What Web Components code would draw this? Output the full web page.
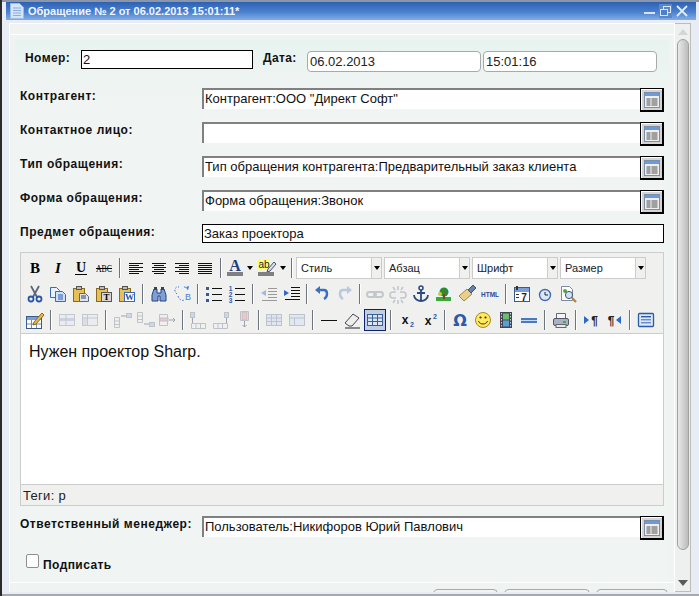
<!DOCTYPE html>
<html><head><meta charset="utf-8"><title>Обращение</title>
<style>
html,body{margin:0;padding:0;height:596px;overflow:hidden;background:#e8ecf4}
body{font-family:"Liberation Sans",Arial,sans-serif}
</style></head><body>
<app-window caption="Обращение № 2 от 06.02.2013 15:01:11*">
  <doc-form></doc-form>
</app-window>
<script>
const rows=(xs,y,ws,step,c)=>ws.map((w,i)=>`<rect x="${xs[i]}" y="${y+i*step}" width="${w}" height="1" fill="${c||'#111'}"/>`).join('');
const align=(xs,ws)=>rows(xs,5,ws,2,'#111');
const doc=(x,y,w,h,f,s)=>`<path d="M${x} ${y}h${w-3}l3 3v${h-3}h-${w}z" fill="${f||'#fff'}" stroke="${s||'#3c6ab0'}"/>`;
const clip=(x=2.5)=>`<rect x="${x}" y="4.5" width="11" height="13" fill="#e6c15a" stroke="#8a6a1e"/><rect x="${x+3}" y="2.5" width="5" height="3" fill="#bbb" stroke="#555"/>`;
const gridT=(c1,c2,op)=>{let s=`<g opacity="${op||1}"><rect x="2.5" y="4.5" width="15" height="11" fill="${c2}" stroke="${c1}"/>`;for(const x of [7.5,12.5])s+=`<path d="M${x} 5v10" stroke="${c1}"/>`;for(const y of [8,11.5])s+=`<path d="M3 ${y}h14" stroke="${c1}"/>`;return s+'</g>'};
const tblOp=(d)=>`<g opacity=".75" fill="none" stroke="#aeb4bf">${d}</g>`;
const ICONS={
 bold:`<text x="10" y="15" text-anchor="middle" font-family="Liberation Serif" font-weight="700" font-size="15">B</text>`,
 italic:`<text x="10" y="15" text-anchor="middle" font-family="Liberation Serif" font-style="italic" font-weight="700" font-size="15">I</text>`,
 underline:`<text x="10" y="14" text-anchor="middle" font-family="Liberation Serif" font-weight="700" font-size="14">U</text><rect x="4" y="16" width="12" height="1" fill="#000"/>`,
 strike:`<text x="10" y="14" text-anchor="middle" font-family="Liberation Serif" font-size="9.5" textLength="16" lengthAdjust="spacingAndGlyphs">ABC</text><rect x="2" y="10" width="16" height="1" fill="#000"/>`,
 left:align([3,3,3,3,3,3],[14,10,14,10,14,10]),
 center:align([3,5,3,5,3,5],[14,10,14,10,14,10]),
 right:align([3,7,3,7,3,7],[14,10,14,10,14,10]),
 justify:align([3,3,3,3,3,3],[14,14,14,14,14,14]),
 fore:`<text x="10" y="13" text-anchor="middle" font-family="Liberation Serif" font-weight="700" font-size="16" fill="#1f3f7f">A</text><rect x="2" y="14" width="16" height="4" fill="#808080"/>`,
 back:`<rect x="1" y="1" width="12" height="11" fill="#ffff66"/><text x="7" y="10" text-anchor="middle" font-family="Liberation Sans" font-size="10" fill="#223">ab</text><path d="M11 11l6-7 2 2-6 7-3 1z" fill="#d8e2f4" stroke="#456"/><rect x="1" y="14" width="16" height="4" fill="#808080"/>`,
 cut:`<path d="M6 2l6 11M14 2L8 13" stroke="#5b6878" stroke-width="1.8" fill="none"/><circle cx="6" cy="15" r="2.5" fill="none" stroke="#2b55a8" stroke-width="1.8"/><circle cx="14" cy="15" r="2.5" fill="none" stroke="#2b55a8" stroke-width="1.8"/>`,
 copy:`${doc(2.5,3.5,9,10,'#eaf2ff')}${doc(7.5,7.5,10,10,'#cfe0fb')}<path d="M10 11h5M10 13h5M10 15h5" stroke="#2c5aa8"/>`,
 paste:`${clip()}${doc(8.5,9.5,9,8,'#dfe6f0','#5a6a80')}<path d="M10 12h5M10 14h5" stroke="#345"/>`,
 pastetext:`${clip()}<rect x="7.5" y="8.5" width="10" height="9" fill="#d9d9d4" stroke="#555"/><text x="12.5" y="16" text-anchor="middle" font-family="Liberation Serif" font-weight="700" font-size="9">T</text>`,
 pasteword:`${clip()}<rect x="7.5" y="8.5" width="10" height="9" fill="#fff" stroke="#3c6ab0"/><text x="12.5" y="16" text-anchor="middle" font-family="Liberation Serif" font-weight="700" font-size="9" fill="#2250a8">W</text>`,
 find:`<path d="M3 11l2-6h3v4h4V5h3l2 6v6h-6v-5H9v5H3z" fill="#7f9fd6" stroke="#24457e"/><rect x="5" y="3" width="3" height="3" fill="#345"/><rect x="12" y="3" width="3" height="3" fill="#345"/>`,
 replace:`<path d="M5 10C1 7 3 2 7 3M6 12c1 4 4 5 7 4M12 3c2 0 3 1 4 3" fill="none" stroke="#3a78d8" stroke-dasharray="1.6 1.6"/><path d="M14 3l3-1-1 4z" fill="#3a78d8"/><text x="16" y="16" text-anchor="middle" font-family="Liberation Sans" font-size="9" fill="#4a7fd0">B</text>`,
 ul:`<rect x="2" y="3" width="3" height="3" fill="#3a5a8a"/><rect x="2" y="9" width="3" height="3" fill="#3a5a8a"/><rect x="2" y="15" width="3" height="3" fill="#3a5a8a"/><path d="M8 4.5h10M8 10.5h10M8 16.5h10" stroke="#111"/>`,
 ol:`<text x="3.5" y="7" text-anchor="middle" font-family="Liberation Sans" font-weight="700" font-size="6.5" fill="#2a5aa8">1</text><text x="3.5" y="13" text-anchor="middle" font-family="Liberation Sans" font-weight="700" font-size="6.5" fill="#2a5aa8">2</text><text x="3.5" y="19" text-anchor="middle" font-family="Liberation Sans" font-weight="700" font-size="6.5" fill="#2a5aa8">3</text><path d="M8 4.5h10M8 10.5h10M8 16.5h10" stroke="#111"/>`,
 outdent:`<g opacity=".45"><path d="M9 4.5h9M9 7.5h9M9 10.5h9M9 13.5h9M3 16.5h15" stroke="#333"/><path d="M2 9l5-3v6z" fill="#3a78d8"/></g>`,
 indent:`<path d="M9 3.5h9M9 6.5h9M9 9.5h9M9 12.5h9M3 15.5h15" stroke="#111"/><path d="M7 9L2 6v6z" fill="#2a6ad0"/>`,
 undo:`<path d="M7 6h5c4 0 4 7 0 9" fill="none" stroke="#3a70c0" stroke-width="2.4"/><path d="M3 6l5-4v8z" fill="#3a70c0"/>`,
 redo:`<g opacity=".3"><path d="M13 6H8c-4 0-4 7 0 9" fill="none" stroke="#3a70c0" stroke-width="2.4"/><path d="M17 6l-5-4v8z" fill="#3a70c0"/></g>`,
 link:`<g opacity=".3" fill="none" stroke="#5a6a80" stroke-width="1.8"><rect x="2" y="8" width="9" height="5" rx="2.5"/><rect x="9" y="8" width="9" height="5" rx="2.5"/></g>`,
 unlink:`<g opacity=".3" fill="none" stroke="#5a6a80" stroke-width="1.6"><path d="M8 8H5a3 3 0 000 6h3M12 8h3a3 3 0 010 6h-3M10 2v4M10 16v4M5 3l2 3M15 3l-2 3M5 19l2-3M15 19l-2-3" /></g>`,
 anchor:`<circle cx="10" cy="4" r="2" fill="none" stroke="#2a4a78" stroke-width="1.5"/><path d="M10 6v11M6 9h8M3 11c0 4 4 6 7 6s7-2 7-6" fill="none" stroke="#2a4a78" stroke-width="1.8"/>`,
 image:`<rect x="2" y="3" width="15" height="14" fill="#e8f4ff"/><rect x="2" y="13" width="15" height="4" fill="#3aa83a"/><circle cx="10" cy="8" r="4.5" fill="#2f8a2f"/><rect x="9" y="10" width="2" height="5" fill="#7a4a1a"/><circle cx="6" cy="10" r="2" fill="#d8c82a"/>`,
 cleanup:`<path d="M2 12l8-7 5 5-8 7z" fill="#e8cf8a" stroke="#a08a4a"/><path d="M11 6l5-5 3 3-5 5z" fill="#6a7fa8" stroke="#456"/>`,
 html:`<text x="10" y="13" text-anchor="middle" font-family="Liberation Sans" font-weight="700" font-size="7.5" fill="#2a4a98" textLength="18" lengthAdjust="spacingAndGlyphs">HTML</text>`,
 date:`<rect x="2.5" y="3.5" width="15" height="14" fill="#fff" stroke="#3a5a8a"/><rect x="3" y="4" width="14" height="4" fill="#7aa0d8"/><path d="M5 2v4" stroke="#333" stroke-width="2"/><text x="12" y="16.5" text-anchor="middle" font-family="Liberation Sans" font-weight="700" font-size="10" fill="#222">7</text><rect x="4" y="10" width="3" height="1" fill="#333"/><rect x="4" y="13" width="3" height="1" fill="#333"/>`,
 clock:`<circle cx="10" cy="11" r="5.5" fill="#dbe7fa" stroke="#4a6aa8" stroke-width="1.4"/><path d="M10 8v3h3" stroke="#223" fill="none"/>`,
 preview:`${doc(3.5,2.5,11,14,'#fff','#7a8aa0')}<circle cx="7" cy="7" r="2" fill="#4aa84a"/><circle cx="11" cy="11" r="3.6" fill="#cfe0fb" stroke="#456"/><path d="M14 14l4 4" stroke="#b08a3a" stroke-width="2.4"/>`,
 tabledit:`<rect x="1.5" y="6.5" width="15" height="12" fill="#fff" stroke="#3a5a8a"/><rect x="2" y="7" width="14" height="3" fill="#7aa0d8"/><path d="M6.5 10v8M11.5 10v8M2 14h14" stroke="#7a8aa0"/><path d="M9 12l8-9 2 2-8 9-3 1z" fill="#e8b84a" stroke="#8a6a1e"/>`,
 delrow:`<g opacity=".5"><rect x="2.5" y="4.5" width="15" height="11" fill="#e6eaf4" stroke="#98a4b8"/><rect x="3" y="8" width="14" height="3" fill="#aab6cc"/><path d="M9 5v10" stroke="#98a4b8"/></g>`,
 splitc:`<g opacity=".5"><rect x="2.5" y="4.5" width="15" height="11" fill="#e6eaf4" stroke="#98a4b8"/><rect x="3" y="8" width="4" height="7" fill="#c5cede"/><path d="M7.5 5v10M3 8h14" stroke="#98a4b8"/></g>`,
 rowb:tblOp(`<path d="M2.5 7.5h5v10h-5zM2.5 11h5M2.5 14.5h5"/><path d="M9 6h5" stroke="#889"/><rect x="14.5" y="3.5" width="5" height="4" fill="#c0cfe8"/>`),
 rowa:tblOp(`<path d="M2.5 2.5h5v10h-5zM2.5 6h5M2.5 9.5h5"/><path d="M9 14h5" stroke="#889"/><rect x="14.5" y="12.5" width="5" height="4" fill="#c0cfe8"/>`),
 rowd:tblOp(`<path d="M1.5 4.5h8v11h-8z"/><rect x="2" y="8" width="8" height="3" fill="#f0b8b8"/><path d="M11 10h6M17 10l-2-2M17 10l-2 2" stroke="#889"/>`),
 colb:tblOp(`<rect x="2.5" y="2.5" width="4" height="5" fill="#c0cfe8"/><path d="M4.5 8v5" stroke="#889"/><path d="M3.5 13.5h14v5h-14zM8 13.5v5M12.5 13.5v5"/>`),
 cola:tblOp(`<rect x="13.5" y="2.5" width="4" height="5" fill="#c0cfe8"/><path d="M15.5 8v5" stroke="#889"/><path d="M2.5 13.5h14v5h-14zM7 13.5v5M11.5 13.5v5"/>`),
 cold:tblOp(`<path d="M6.5 1.5h8v9h-8z"/><rect x="8" y="2" width="5" height="8" fill="#f0b8b8"/><path d="M10.5 11v6M10.5 17l-2-2M10.5 17l2-2" stroke="#889"/>`),
 split:gridT('#a4b0c4','#dbe2ee',.7),
 merge:`<g opacity=".7"><rect x="2.5" y="4.5" width="15" height="11" fill="#dbe6f2" stroke="#a4b0c4"/><path d="M3 8h14M7.5 8v7" stroke="#a4b0c4"/></g>`,
 hr:`<rect x="2" y="10" width="16" height="1" fill="#111"/>`,
 eraser:`<path d="M3 13l8-9 6 4-7 8H7z" fill="#eee" stroke="#445"/><path d="M3 18h15" stroke="#223"/>`,
 visual:gridT('#3a5f98','#dbe5f4'),
 sub:`<text x="8" y="14" text-anchor="middle" font-family="Liberation Sans" font-weight="700" font-size="12" fill="#111">x</text><text x="15" y="17" text-anchor="middle" font-family="Liberation Sans" font-weight="700" font-size="7" fill="#2a5aa8">2</text>`,
 sup:`<text x="8" y="15" text-anchor="middle" font-family="Liberation Sans" font-weight="700" font-size="12" fill="#111">x</text><text x="15" y="9" text-anchor="middle" font-family="Liberation Sans" font-weight="700" font-size="7" fill="#2a5aa8">2</text>`,
 omega:`<text x="10" y="16" text-anchor="middle" font-family="DejaVu Sans" font-weight="700" font-size="16" fill="#2a5aa8">Ω</text>`,
 smile:`<circle cx="10" cy="10" r="7.5" fill="#ffe85a" stroke="#a88a20"/><circle cx="7.5" cy="7.5" r="1.1" fill="#333"/><circle cx="12.5" cy="7.5" r="1.1" fill="#333"/><path d="M5.5 11c1 4 8 4 9 0" fill="none" stroke="#333"/>`,
 media:`<rect x="4" y="2" width="12" height="16" fill="#445"/><rect x="7" y="3.5" width="6" height="6" fill="#6ac06a"/><rect x="7" y="10.5" width="6" height="6" fill="#5aa0d8"/><path d="M5.5 3v14M14.5 3v14" stroke="#ccd" stroke-dasharray="1.5 1.5"/>`,
 hrblue:`<rect x="2" y="8" width="16" height="5" fill="#4a78c0"/><rect x="2" y="10" width="16" height="1" fill="#c8d8f0"/>`,
 print:`<path d="M5.5 3.5h9v6h-9z" fill="#f4f4f4" stroke="#667"/><rect x="2.5" y="8.5" width="15" height="7" rx="1.5" fill="#a8b2c0" stroke="#556"/><rect x="5" y="14.5" width="10" height="3" fill="#e8e8e8" stroke="#667"/><rect x="12" y="11" width="3" height="2" fill="#2ac02a"/>`,
 ltr:`<path d="M3 6l5 4-5 4z" fill="#2a6ad0"/><text x="13.5" y="15" text-anchor="middle" font-family="Liberation Sans" font-weight="700" font-size="12" fill="#222">¶</text>`,
 rtl:`<path d="M17 6l-5 4 5 4z" fill="#2a6ad0"/><text x="7" y="15" text-anchor="middle" font-family="Liberation Sans" font-weight="700" font-size="12" fill="#222">¶</text>`,
 fullscreen:`<rect x="2.5" y="3.5" width="15" height="13" rx="1" fill="#dbe7fa" stroke="#2a5aa8" stroke-width="1.3"/><rect x="5" y="6" width="10" height="1.4" fill="#2a5aa8"/><rect x="5" y="9" width="10" height="1.4" fill="#6a8ac8"/><rect x="5" y="12" width="10" height="1.4" fill="#6a8ac8"/>`
};

class Base extends HTMLElement{
  render(html){ if(!this.shadowRoot) this.attachShadow({mode:'open'}); this.shadowRoot.innerHTML=html; }
}
class TbIcon extends Base{connectedCallback(){
  const n=this.getAttribute('name');
  this.render(`<style>:host{display:flex;align-items:center;justify-content:center;width:23px;height:26px;flex:none}
  .a{display:flex;width:20px;height:20px;border:1px solid transparent}
  :host([active]) .a{background:#c2cfe2;border-color:#0a246a}
  svg{display:block;width:20px;height:20px;overflow:visible}</style>
  <div class="a"><svg viewBox="0 0 20 20">${ICONS[n]}</svg></div>`);
}}
class TbSep extends Base{connectedCallback(){this.render(`<style>:host{display:flex;justify-content:center;align-items:center;width:var(--w,9px);height:26px;flex:none}
  i{display:block;width:1px;height:20px;background:#6d7680;border-right:1px solid #fff}</style><i></i>`)}}
class TbDrop extends Base{connectedCallback(){this.render(`<style>:host{display:flex;justify-content:center;align-items:center;width:10px;height:26px;flex:none}
  i{border:3px solid transparent;border-top:4px solid #000;border-bottom:0}</style><i></i>`)}}
class TbSelect extends Base{connectedCallback(){this.render(`<style>:host{display:flex;box-sizing:border-box;width:86px;height:22px;margin-right:2px;flex:none;border:1px solid #ccc;background:#fff;font:11px/20px "Liberation Sans",sans-serif;color:#222}
  .t{flex:1;padding-left:4px;overflow:hidden;white-space:nowrap}
  .b{width:9px;background:#f0f0ee;border-left:1px solid #ccc;display:flex;align-items:center;justify-content:center}
  i{border:3px solid transparent;border-top:4px solid #000;border-bottom:0}</style>
  <div class="t"><slot></slot></div><div class="b"><i></i></div>`)}}
class TbRow extends Base{connectedCallback(){this.render(`<style>:host{display:flex;align-items:center;height:26px;padding-left:2px}</style><slot></slot>`)}}
class RichEditor extends Base{connectedCallback(){
  const s=n=>n.split(' ').map(k=>k==='|'?'<tb-sep></tb-sep>':k==='|7'?'<tb-sep style="--w:7px"></tb-sep>':k==='*visual'?'<tb-icon name="visual" active></tb-icon>':`<tb-icon name="${k}"></tb-icon>`).join('');
  this.render(`<style>:host{display:flex;flex-direction:column;box-sizing:border-box;height:254px;border:1px solid #ccc;background:#f0f0ee;font-family:"Liberation Sans",sans-serif}
  .tb{height:81px;flex:none;box-sizing:border-box;padding-top:2px;border-bottom:1px solid #ccc;overflow:hidden}
  .edit{flex:1;background:#fff;padding:8px 8px;font-size:16px;line-height:20px;color:#111}
  .st{height:21px;flex:none;box-sizing:border-box;border-top:1px solid #ccc;padding:2px 2px 0;font-size:13px;line-height:17px;color:#222;letter-spacing:.3px}</style>
  <div class="tb">
  <tb-row>${s('bold italic underline strike | left center right justify |')}<tb-icon name="fore" style="width:20px"></tb-icon><tb-drop></tb-drop><tb-icon name="back" style="width:24px"></tb-icon><tb-drop style="width:8px"></tb-drop><tb-sep></tb-sep><tb-select>Стиль</tb-select><tb-select>Абзац</tb-select><tb-select>Шрифт</tb-select><tb-select>Размер</tb-select></tb-row>
  <tb-row>${s('cut copy paste pastetext pasteword | find replace | ul ol | outdent indent |7 undo redo |7 link unlink anchor image cleanup html | date clock preview')}</tb-row>
  <tb-row>${s('tabledit | delrow splitc | rowb rowa rowd |7 colb cola cold |7 split merge | hr eraser *visual | sub sup |7 omega smile media hrblue | print |7 ltr rtl | fullscreen')}</tb-row>
  </div>
  <div class="edit">Нужен проектор Sharp.</div>
  <div class="st">Теги: p</div>`);
}}
class RefField extends Base{connectedCallback(){this.render(`<style>:host{display:flex;align-items:flex-start;height:24px;width:462px}
  .f{box-sizing:border-box;width:438px;height:21px;background:#fff;border-top:2px solid #808080;border-left:2px solid #808080;padding:0 0 0 1px;font:13px/18px "Liberation Sans",sans-serif;color:#111;white-space:nowrap;overflow:hidden}
  button{box-sizing:border-box;margin:0;padding:0;width:24px;height:24px;border:2px solid #000;border-width:1px 2px 2px 1px;background:#d4d4d4;box-shadow:inset 1px 1px #fff;display:flex;align-items:center;justify-content:center}
  svg{display:block}</style>
  <div class="f"><slot></slot></div>
  <button aria-label="Выбрать"><svg width="16" height="16" viewBox="0 0 16 16"><rect x=".5" y=".5" width="15" height="15" fill="#efefef" stroke="#7a8ea8"/><rect x="1" y="1" width="14" height="3" fill="#6a9ae0"/><rect x="2.5" y="6" width="4" height="8" fill="#a0a0a0"/><rect x="7.5" y="6" width="6" height="8" fill="#a0a0a0"/></svg></button>`)}}
class FormRow extends Base{connectedCallback(){this.render(`<style>:host{display:flex;align-items:flex-start;height:34px}
  .l{width:182px;flex:none;font:700 12px/14px "Liberation Sans",sans-serif;color:#111;letter-spacing:.52px;position:relative;top:1px}</style>
  <div class="l">${this.getAttribute('label')}</div><slot></slot>`)}}
class DocForm extends Base{connectedCallback(){this.render(`<style>:host{display:block;font-family:"Liberation Sans",sans-serif}
  .head{display:flex;align-items:flex-start;height:38px}
  .hl{font:700 12px/14px "Liberation Sans",sans-serif;color:#111;letter-spacing:.4px;margin-top:1px}
  .num{box-sizing:border-box;width:172px;height:19px;border:1px solid #000;background:#fff;font:13px/17px "Liberation Sans",sans-serif;padding-left:1px;color:#111;margin:0 10px 0 10px}
  .dt{box-sizing:border-box;width:174px;height:21px;margin:1px 2px 0 0;border:1px solid #a9a9a9;border-radius:4px;background:#fff;font:13px/19px "Liberation Sans",sans-serif;padding-left:2px;color:#222}
  .subj{box-sizing:border-box;width:462px;height:19px;border:1px solid #000;background:#fff;font:13px/17px "Liberation Sans",sans-serif;padding-left:1px;color:#111}
  rich-editor{margin-bottom:10px}
  .sign{display:flex;align-items:flex-start;margin:14px 0 0 6px;height:26px;font:700 12px/14px "Liberation Sans",sans-serif;color:#111;letter-spacing:.42px}
  .cb{box-sizing:border-box;width:13px;height:14px;border:1px solid #8e8e8e;border-radius:2px;background:#fff;margin-right:4px;flex:none}
  .sign span{margin-top:4px}</style>
  <div class="head"><span class="hl" style="width:46px;padding-left:5px;flex:none">Номер:</span><div class="num">2</div><span class="hl" style="width:44px;flex:none">Дата:</span><div class="dt">06.02.2013</div><div class="dt">15:01:16</div></div>
  <form-row label="Контрагент:"><ref-field>Контрагент:ООО "Директ Софт"</ref-field></form-row>
  <form-row label="Контактное лицо:"><ref-field></ref-field></form-row>
  <form-row label="Тип обращения:"><ref-field>Тип обращения контрагента:Предварительный заказ клиента</ref-field></form-row>
  <form-row label="Форма обращения:"><ref-field>Форма обращения:Звонок</ref-field></form-row>
  <form-row label="Предмет обращения:" style="height:28px"><div class="subj">Заказ проектора</div></form-row>
  <rich-editor></rich-editor>
  <form-row label="Ответственный менеджер:" style="height:24px"><ref-field>Пользователь:Никифоров Юрий Павлович</ref-field></form-row>
  <div class="sign"><div class="cb"></div><span>Подписать</span></div>`);
}}
class AppWindow extends Base{connectedCallback(){this.render(`<style>:host{display:flex;width:699px;height:596px;overflow:hidden;box-sizing:border-box;background:#e8ecf4;font-family:"Liberation Sans",sans-serif}
  .edge{width:2px;background:#2b2b2b;flex:none}
  .win{flex:1;display:flex;flex-direction:column;min-width:0}
  .top{height:2px;background:#8d96a8;flex:none}
  .bottom{height:2px;background:#a6a9b0;flex:none}
  .title{height:18px;margin-left:4px;margin-right:3px;flex:none;display:flex;align-items:center;background:linear-gradient(#2d62b2,#4a80cf 55%,#82aee6);color:#fff;font:700 11px/18px "Liberation Sans",sans-serif}
  .title svg{flex:none}
  .cap{flex:1;margin-left:3px;white-space:nowrap;color:#f2f6ff}
  .ctl{display:flex;gap:3px;margin-right:7px;align-items:center}
  .main{flex:1;display:flex;min-height:0;margin:3px 8px 2px 7px}
  .content{width:666px;flex:none;display:flex;flex-direction:column;box-sizing:border-box;border:1px solid #fff;border-bottom:0;background:#eff4f3;height:569px;overflow:hidden}
  .hd{height:10px;flex:none;border-bottom:1px solid #fff}
  .pane{flex:none;height:543px;margin:5px 5px 0;padding:10px 5px 0;box-sizing:border-box;background:linear-gradient(#e8f3ef,#f0f4f3 60px)}
  .foot{flex:1;border-top:1px solid #fff;margin-top:-1px;display:flex;justify-content:flex-end;gap:6px;padding:6px 6px 0 0}
  .foot i{display:block;height:10px;box-sizing:border-box;border:1px solid #aaa;border-bottom:0;border-radius:5px 5px 0 0;background:#f3f3f3}
  .sb{width:16px;flex:none;box-sizing:border-box;height:569px;border:1px solid #bdbdb8;border-left:0;background:#eef0f0;display:flex;flex-direction:column;align-items:center}
  .up{height:15px;flex:none;display:flex;align-items:center;justify-content:center}
  .up i{border:5px solid transparent;border-top:0;border-bottom:6px solid #d4d6d6}
  .th{box-sizing:border-box;width:12px;height:511px;flex:none;border:1px solid #a0a0a0;border-radius:6px;background:linear-gradient(90deg,#e9e9e9,#c9c9c9 70%,#bcbcbc)}
  .dn{flex:1;display:flex;align-items:flex-end;justify-content:center;padding-bottom:5px}
  .dn i{border:5px solid transparent;border-bottom:0;border-top:6px solid #5a5a5a}</style>
  <div class="edge"></div>
  <div class="win"><div class="top"></div>
   <div class="title">
     <svg width="16" height="18" viewBox="0 0 16 18" style="margin-left:3px"><path d="M1.5 1.5h9l4 4v11h-13z" fill="#d5e4f6" stroke="#9cbde4"/><path d="M4 6h8M4 8.5h8M4 11h8M4 13.5h8" stroke="#8aaedd"/></svg>
     <div class="cap">${this.getAttribute('caption')}</div>
     <div class="ctl"><svg width="12" height="14" viewBox="0 0 12 14"><rect y="8" width="11" height="2" fill="#d8e4f6"/></svg><svg width="13" height="14" viewBox="0 0 13 14"><rect width="13" height="14" fill="#5c88c6"/><rect x="4.5" y="2.5" width="7" height="6" fill="none" stroke="#dbe7f8"/><rect x="1.5" y="5.5" width="7" height="6" fill="#4a80cf" stroke="#dbe7f8"/></svg><svg width="14" height="14" viewBox="0 0 14 14"><path d="M2 2l10 10M12 2L2 12" stroke="#e2ebf8" stroke-width="1.8"/></svg></div>
   </div>
   <div class="main">
     <div class="content"><div class="hd"></div><div class="pane"><slot></slot></div>
       <div class="foot"><i style="width:65px"></i><i style="width:86px"></i><i style="width:72px"></i></div></div>
     <div class="sb"><div class="up"><i></i></div><div class="th"></div><div class="dn"><i></i></div></div>
   </div>
   <div class="bottom"></div>
  </div>`)}}
const defs={'tb-icon':TbIcon,'tb-sep':TbSep,'tb-drop':TbDrop,'tb-select':TbSelect,'tb-row':TbRow,'rich-editor':RichEditor,'ref-field':RefField,'form-row':FormRow,'doc-form':DocForm,'app-window':AppWindow};
for(const k in defs) customElements.define(k,defs[k]);
</script>
</body></html>
